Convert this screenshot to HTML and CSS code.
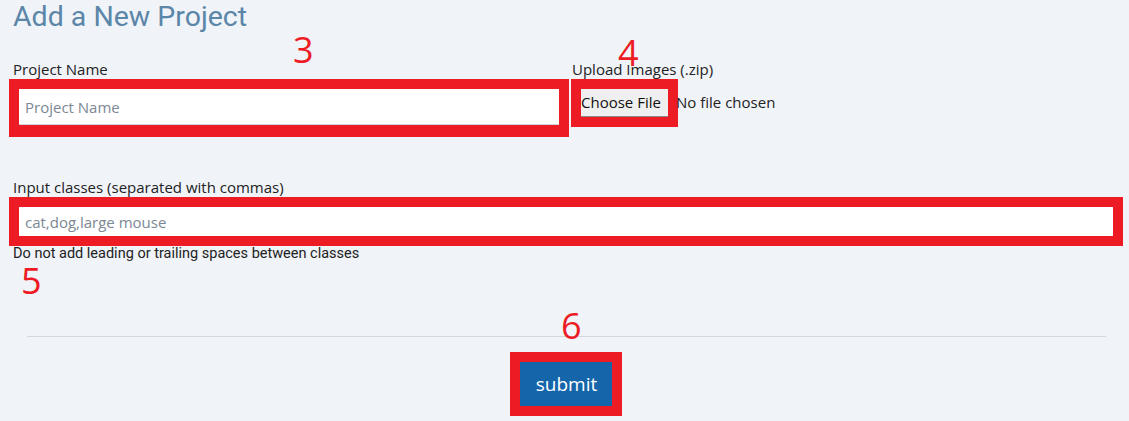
FILE: index.html
```html
<!DOCTYPE html>
<html>
<head>
<meta charset="utf-8">
<link rel="stylesheet" href="styles.css">
</head>
<body>
<div class="page">
  <h1 class="title">Add a New Project</h1>
  <div class="row-top">
    <div class="field field-name">
      <label class="label">Project Name</label>
      <div class="mark">
        <input class="text-input" type="text" placeholder="Project Name">
      </div>
      <span class="num num-3">3</span>
    </div>
    <div class="field field-upload">
      <label class="label label-upload">Upload Images (.zip)</label>
      <div class="upload-row">
        <div class="mark mark-file">
          <span class="file-btn">Choose File</span>
        </div>
        <span class="file-status">No file chosen</span>
      </div>
      <span class="num num-4">4</span>
    </div>
  </div>
  <div class="field field-classes">
    <label class="label">Input classes (separated with commas)</label>
    <div class="mark">
      <input class="text-input" type="text" placeholder="cat,dog,large mouse">
    </div>
    <p class="help">Do not add leading or trailing spaces between classes</p>
    <span class="num num-5">5</span>
  </div>
  <hr class="divider">
  <div class="actions">
    <div class="mark mark-submit">
      <button class="submit" type="button">submit</button>
    </div>
    <span class="num num-6">6</span>
  </div>
</div>
</body>
</html>
```
FILE: styles.css
```css
* { box-sizing: border-box; }
html, body { margin: 0; padding: 0; }
body {
  background: #f0f3f8;
  font-family: "Open Sans", "Noto Sans", sans-serif;
  color: #222;
  width: 1129px;
  height: 421px;
  overflow: hidden;
}
.page {
  position: relative;
  padding: 0 6px 0 9px;
}
.title {
  margin: 0;
  padding-left: 4px;
  font-family: "Liberation Sans Narrow", "Roboto", sans-serif;
  font-weight: normal;
  font-size: 28.5px;
  line-height: 34px;
  color: #5b86a8;
  height: 36px;
}
.row-top {
  display: flex;
  gap: 2px;
  margin-top: 23px;
}
.field { position: relative; display: flex; flex-direction: column; }
.field-name { width: 560px; }
.label {
  font-size: 15px;
  line-height: 20px;
  padding-left: 4px;
  color: #222;
}
.label-upload { padding-left: 1px; }
.mark {
  border: 10px solid #ed1c24;
  background: #fff;
}
.text-input {
  display: block;
  width: 100%;
  height: 36px;
  border: 0;
  border-bottom: 1px solid #cfd5dc;
  background: #fff;
  padding: 0 6px;
  font-family: "Open Sans", "Noto Sans", sans-serif;
  font-size: 15px;
  color: #333;
  outline: none;
}
.field-name .mark { height: 58px; border-bottom-width: 12px; }
.text-input::placeholder { color: #7c8794; }
.upload-row { display: flex; align-items: flex-start; }
.mark-file {
  width: 107px;
  height: 48px;
  background: #efefef;
  padding: 0;
}
.file-btn {
  display: block;
  height: 28px;
  width: 87px;
  background: #efefef;
  border-bottom: 1px solid #8a8a8a;
  font-size: 15px;
  line-height: 26px;
  color: #111;
  text-align: left;
  padding-left: 0;
  white-space: nowrap;
  overflow: hidden;
}
.file-status {
  font-size: 15px;
  line-height: 26px;
  margin-top: 10px;
  margin-left: -2px;
  color: #222;
}
.field-classes { margin-top: 40px; width: 1114px; }
.field-classes .mark { height: 49px; }
.field-classes .text-input { height: 29px; border-bottom: 0; }
.help {
  margin: 0;
  padding-left: 4px;
  font-family: "Liberation Sans Narrow", "Roboto", sans-serif;
  font-size: 14.5px;
  line-height: 16px;
  color: #222;
}
.divider {
  border: 0;
  border-top: 1px solid #d3d8de;
  margin: 74px 17px 0 18px;
}
.actions {
  position: relative;
  display: flex;
  justify-content: center;
  margin-top: 15px;
  padding-right: 1px;
}
.mark-submit {
  width: 112px;
  height: 64px;
}
.submit {
  display: block;
  width: 100%;
  height: 100%;
  border: 0;
  background: #1565aa;
  color: #fff;
  font-family: "Open Sans", "Noto Sans", sans-serif;
  font-size: 19px;
  padding: 0 0 0 2px;
}
.num {
  position: absolute;
  font-family: "Open Sans", "Noto Sans", sans-serif;
  font-size: 36px;
  line-height: 28px;
  color: #ed1c24;
}
.num-3 { left: 284px; top: -23px; }
.num-4 { left: 47px; top: -20px; }
.num-5 { left: 12px; top: 90px; }
.num-6 { left: 552px; top: -40px; }
```
